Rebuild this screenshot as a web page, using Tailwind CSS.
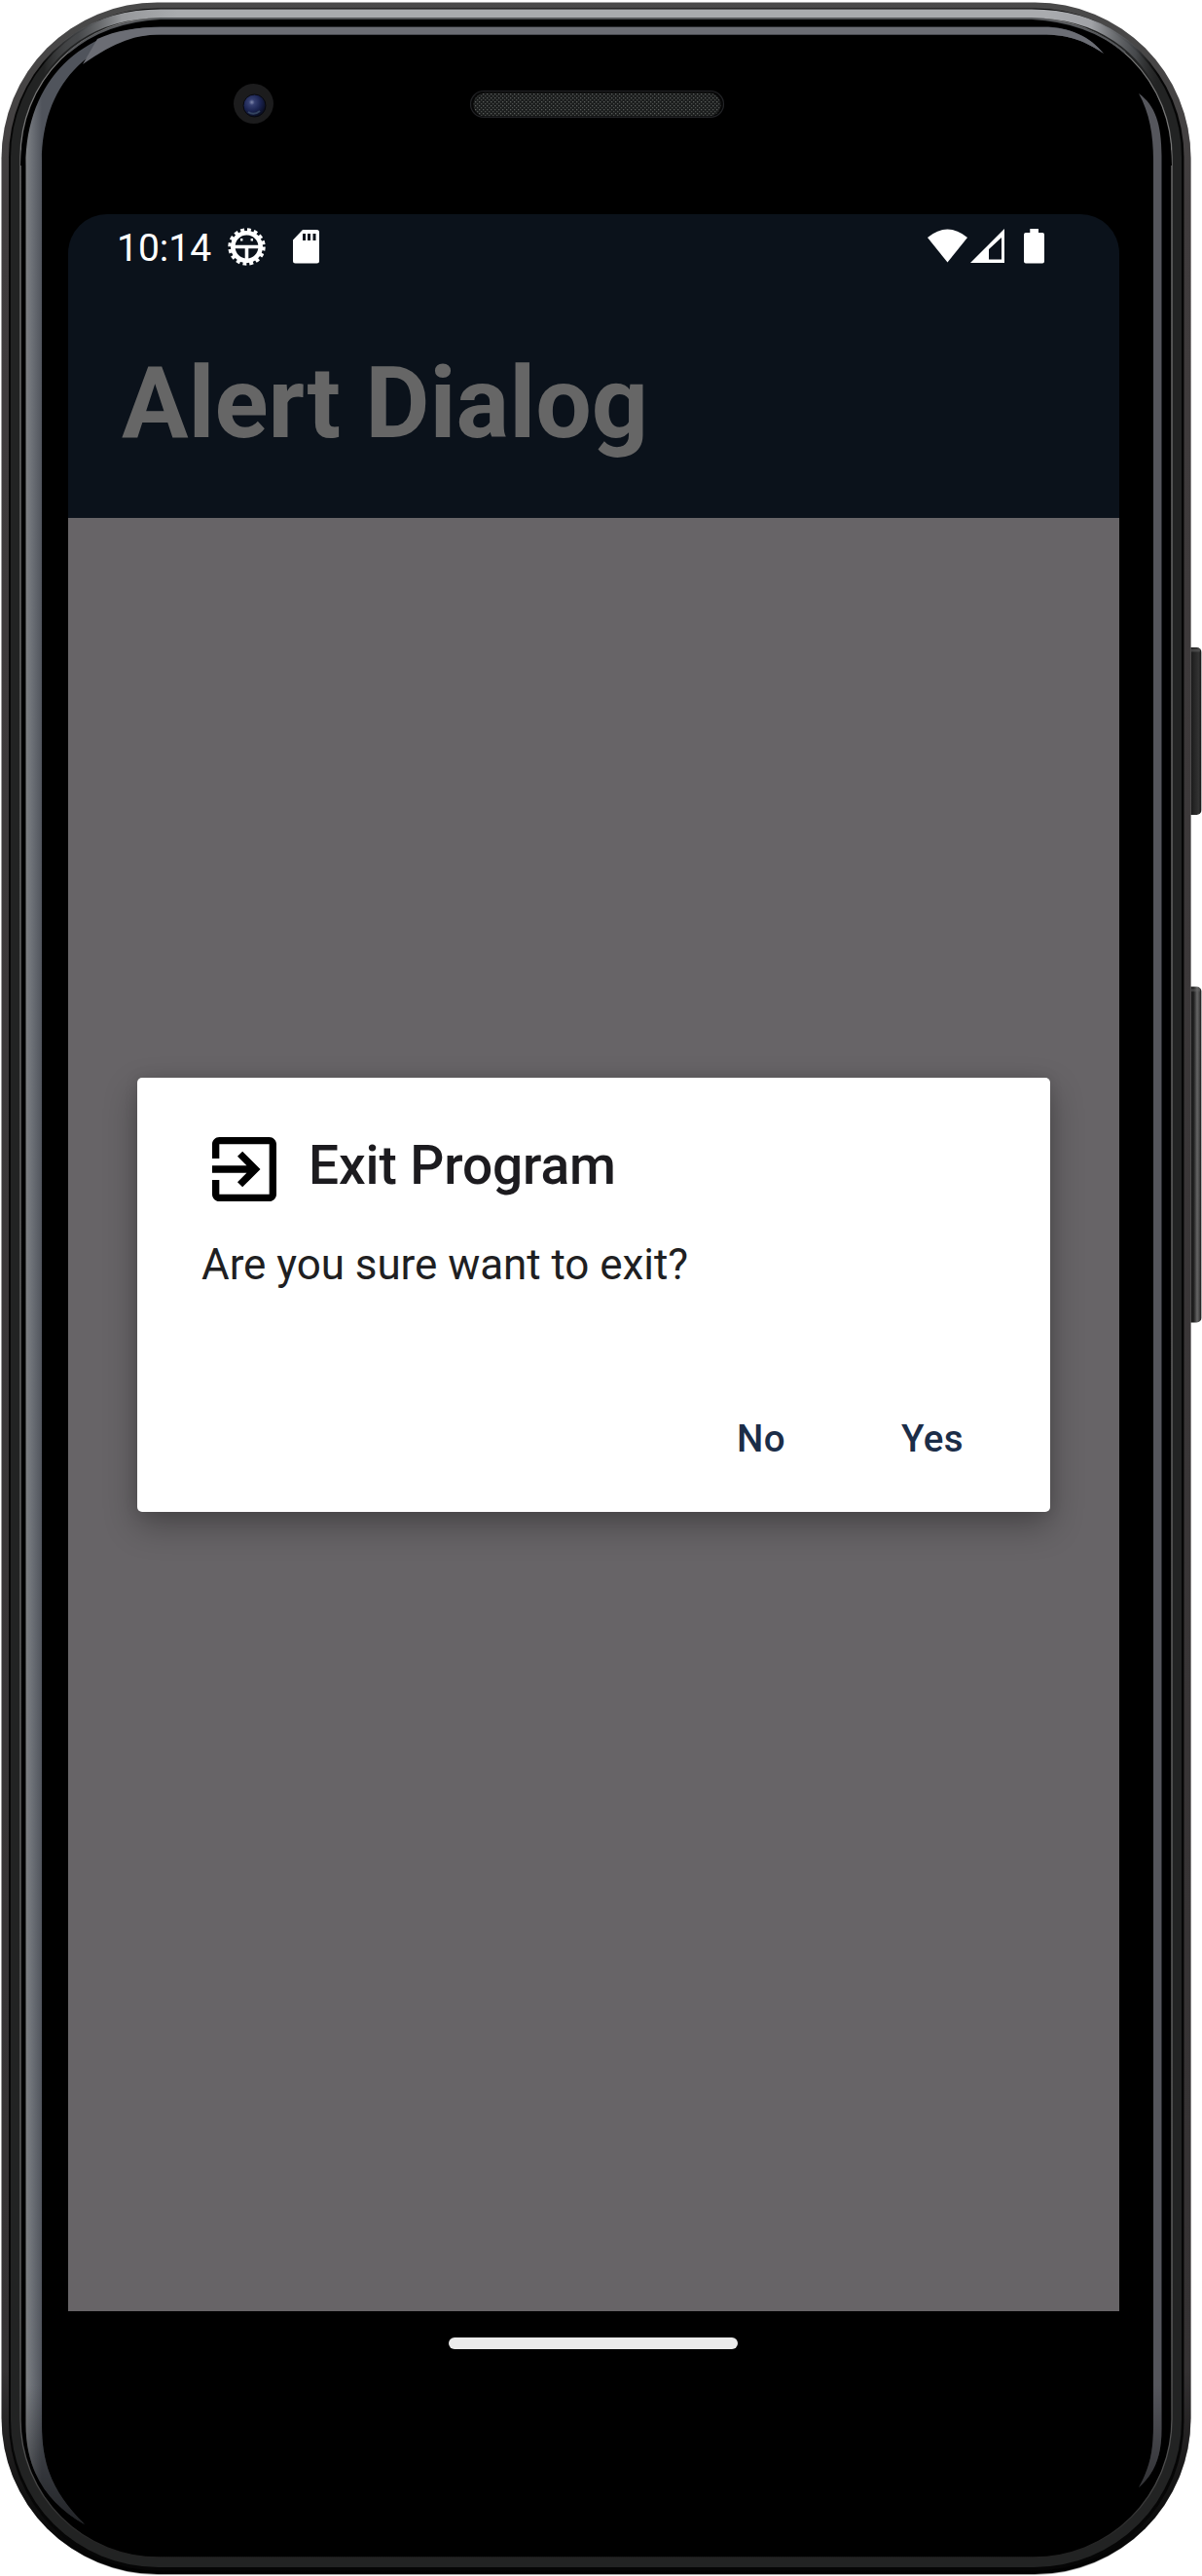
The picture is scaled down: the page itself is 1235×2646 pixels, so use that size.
<!DOCTYPE html>
<html lang="en">
<head>
<meta charset="utf-8">
<title>Alert Dialog</title>
<script src="https://cdn.jsdelivr.net/npm/@tailwindcss/browser@4"></script>
</head>
<body class="bg-white font-[Roboto,sans-serif]">
<div class="relative w-[1235px] h-[2646px] overflow-hidden">

  <!-- phone body -->
  <svg class="absolute inset-0" width="1235" height="2646" viewBox="0 0 1235 2646" fill="none" aria-hidden="true">
    <defs>
      <linearGradient id="btn" x1="1222" x2="1235" y1="0" y2="0" gradientUnits="userSpaceOnUse"><stop offset="0" stop-color="#111"/><stop offset=".3" stop-color="#222"/><stop offset=".75" stop-color="#333"/><stop offset=".9" stop-color="#1a1a1a"/><stop offset="1" stop-color="#999"/></linearGradient>
      <linearGradient id="btn2" x1="1222" x2="1235" y1="0" y2="0" gradientUnits="userSpaceOnUse"><stop offset="0" stop-color="#111"/><stop offset=".35" stop-color="#222"/><stop offset=".62" stop-color="#666"/><stop offset=".8" stop-color="#444"/><stop offset=".9" stop-color="#222"/><stop offset="1" stop-color="#888"/></linearGradient>
      <linearGradient id="rim" x1="0" x2="0" y1="0" y2="2646" gradientUnits="userSpaceOnUse"><stop offset="0" stop-color="#4a4a4a"/><stop offset=".08" stop-color="#403c3d"/><stop offset=".92" stop-color="#353233"/><stop offset=".97" stop-color="#111"/><stop offset="1" stop-color="#000"/></linearGradient>
      <linearGradient id="shine" x1="45" x2="1190" y1="0" y2="0" gradientUnits="userSpaceOnUse"><stop offset="0" stop-color="#8a8c8f" stop-opacity="0"/><stop offset=".03" stop-color="#55575a" stop-opacity=".7"/><stop offset=".07" stop-color="#96989b"/><stop offset=".12" stop-color="#a9abae"/><stop offset=".9" stop-color="#a9abae"/><stop offset=".94" stop-color="#a0a2a6"/><stop offset=".98" stop-color="#55585c" stop-opacity=".7"/><stop offset="1" stop-color="#333" stop-opacity="0"/></linearGradient>
      <linearGradient id="glare" x1="26" x2="43" y1="0" y2="0" gradientUnits="userSpaceOnUse"><stop offset="0" stop-color="#7f8183"/><stop offset=".35" stop-color="#6f7379"/><stop offset="1" stop-color="#50545c"/></linearGradient>
      <linearGradient id="fade" x1="0" x2="0" y1="2450" y2="2600" gradientUnits="userSpaceOnUse"><stop offset="0" stop-color="#000" stop-opacity="0"/><stop offset="1" stop-color="#000" stop-opacity=".6"/></linearGradient>
      <linearGradient id="line" x1="0" x2="0" y1="0" y2="2646" gradientUnits="userSpaceOnUse"><stop offset="0" stop-color="#777"/><stop offset=".9" stop-color="#666"/><stop offset=".96" stop-color="#4a4a4a"/><stop offset=".99" stop-color="#222"/></linearGradient>
      <radialGradient id="lens" cx=".38" cy=".35" r=".65"><stop offset="0" stop-color="#8189ad"/><stop offset=".2" stop-color="#353f70"/><stop offset=".6" stop-color="#1a2350"/><stop offset="1" stop-color="#0a0e22"/></radialGradient>
      <pattern id="mesh" width="4" height="4" patternUnits="userSpaceOnUse"><rect width="4" height="4" fill="#1b1d1d"/><rect width="1.300" height="1.300" fill="#5a5d5b"/><rect x="2" y="2" width="1.300" height="1.300" fill="#4a4d4b"/></pattern>
    </defs>
    <rect x="1216" y="665" width="18.500" height="172" rx="5" fill="url(#btn)"/>
    <rect x="1216" y="1013.500" width="18.500" height="345" rx="5" fill="url(#btn2)"/>
    <path d="M1224 668h9M1224 1017h9" stroke="#666" stroke-opacity=".5" stroke-width="3"/>
    <rect x="2" y="3" width="1221.500" height="2642" rx="161" fill="#a5a5a5"/>
    <rect x="1.500" y="2.500" width="1222" height="2641.500" rx="160" fill="url(#rim)"/>
    <rect x="9" y="8.500" width="1207.500" height="2632" rx="153" fill="#060606"/>
    <rect x="11" y="10" width="1203" height="2627" rx="151" fill="#222323"/>
    <rect x="21" y="19" width="1183" height="2608" rx="142" fill="#000" stroke="url(#line)" stroke-width="1.300"/>
    <path d="M24 170C24 90 88 23 165 23H1060C1138 23 1201 90 1201 170" stroke="#000" stroke-width="6"/>
    <path d="M28 100C50 50 95 14 165 14H1060C1130 14 1176 50 1197 100" stroke="url(#shine)" stroke-width="9"/>
    <path d="M70 54C97 31 128 21 165 19H1060C1098 21 1129 31 1156 54" stroke="#55575a" stroke-width="2"/>
    <path d="M26.500 170C26.500 82 85 27.500 165 27.500H1072C1100 27.500 1120 38 1134 55C1116 43 1100 35.500 1070 35.500H165C90 35.500 43 90 43 165V2490C43 2535 56 2562 87 2593C50 2572 26.500 2540 26.500 2490Z" fill="url(#glare)"/>
    <path d="M100 40C120 31 140 28 165 28H1072C1100 28 1120 38 1134 55C1116 43 1100 35.500 1070 35.500H165C140 35.500 120 42 85 66Z" fill="#6b6d74"/>
    <path d="M26.500 2440H43V2490C43 2535 56 2562 87 2593C50 2572 26.500 2540 26.500 2490Z" fill="url(#fade)"/>
    <path d="M1170 96C1187 108 1193.500 128 1193.500 160V2495C1193.500 2522 1187 2540 1170 2555C1181 2535 1185 2520 1185 2490V165C1185 138 1181 116 1170 96Z" fill="#55565c"/>
    <path d="M1185 2440H1193.500V2495C1193.500 2522 1187 2540 1170 2555C1181 2535 1185 2520 1185 2490Z" fill="url(#fade)"/>
    <circle cx="260.500" cy="106.500" r="20.500" fill="#1c1c1d"/>
    <circle cx="261.500" cy="108.500" r="11.500" fill="url(#lens)" stroke="#07080d"/>
    <path d="M255 115q6 4 12-1" stroke="#4a6078" stroke-opacity=".6" stroke-width="2"/>
    <rect x="483.500" y="93.500" width="260" height="27" rx="13.500" fill="#070707" stroke="#222326" stroke-width="1.200"/>
    <rect x="486.500" y="95.500" width="254" height="24" rx="12" fill="url(#mesh)"/>
  </svg>

  <div class="relative flex flex-col w-[1080px] ml-[70px] pt-[220px]">
    <header class="h-[312px] bg-[#0b121b] rounded-t-[40px]">
      <div class="flex items-start h-[64px] pl-[50px] pr-[77px]">
        <span class="text-[39px] leading-[46px] mt-[12px] w-[97px] text-white whitespace-nowrap">10:14</span>
        <svg class="mt-[14px] ml-[17px]" width="39" height="39" viewBox="-19.500 -19.500 39 39" fill="none" stroke="#fff">
          <circle r="14.200" stroke-width="4.600"/>
          <circle r="17.200" stroke-width="4" stroke-dasharray="3.800 2.955"/>
          <path d="M-14 0H14M0 0V15" stroke-width="3.600"/>
          <path d="M-6.500-7.200h2.400M4.100-7.200h2.400" stroke-width="2.400"/>
        </svg>
        <svg class="mt-[16px] ml-[28px]" width="27" height="35" viewBox="0 0 27 35"><path fill="#fff" fill-rule="evenodd" d="M10 0H24.500Q27 0 27 2.500V32Q27 34.500 24.500 34.500H2.500Q0 34.500 0 32V10.500ZM10 4V11H13V4ZM15 4V11H18V4ZM20.500 4V11H23.500V4Z"/></svg>
        <div class="flex ml-auto mt-[15px] items-start">
          <svg width="41" height="35" viewBox="0 0 41 35"><path fill="#fff" d="M20.500 34.500L0 9Q20.500-8 41 9Z"/></svg>
          <svg class="ml-[3px]" width="35" height="35" viewBox="0 0 35 35"><path fill="#fff" fill-rule="evenodd" d="M35 0V35H0ZM32 9L19 21V31.500H32Z"/></svg>
          <svg class="ml-[20px]" width="21" height="36" viewBox="0 0 21 36"><path fill="#fff" d="M6.300 0H15V4H19Q21 4 21 6V33.500Q21 35.500 19 35.500H2Q0 35.500 0 33.500V6Q0 4 2 4H6.300Z"/></svg>
        </div>
      </div>
      <h1 class="pl-[55px] mt-[70px] text-[102px] leading-[120px] font-bold text-[#666]">Alert Dialog</h1>
    </header>

    <main class="h-[1842px] bg-[#676467] pt-[575px] pl-[71px]">
      <section role="dialog" class="flex flex-col w-[938px] h-[446px] bg-white rounded-[5px] pt-[50px] pl-[66px] shadow-[0_14px_34px_rgba(0,0,0,0.3),0_0_14px_rgba(0,0,0,0.1)]">
        <div class="flex items-start">
          <svg width="88" height="88" viewBox="0 0 24 24"><path d="M10.090 15.590L11.500 17l5-5-5-5-1.410 1.410L12.670 11H3v2h9.670l-2.580 2.590zM19 3H5c-1.110 0-2 .9-2 2v4h2V5h14v14H5v-4H3v4c0 1.100.89 2 2 2h14c1.100 0 2-.9 2-2V5c0-1.100-.9-2-2-2z"/></svg>
          <h2 class="ml-[22px] mt-[8px] text-[55px] leading-[64px] tracking-[-0.1px] font-medium text-[#1c1b1f]">Exit Program</h2>
        </div>
        <p class="mt-[28px] text-[44px] leading-[52px] tracking-[-0.06px] text-[#1f1f22]">Are you sure want to exit?</p>
        <div class="flex mt-[130px] ml-[550px] text-[38.500px] leading-[46px] tracking-[0.4px] font-medium text-[#1b2d48]">
          <button class="w-[169px] text-left">No</button>
          <button class="text-left">Yes</button>
        </div>
      </section>
    </main>
    <div class="flex pl-[391px] pt-[27px]"><div class="w-[297px] h-[12px] rounded-full bg-[#ebebeb]"></div></div>
  </div>
</div>
</body>
</html>
